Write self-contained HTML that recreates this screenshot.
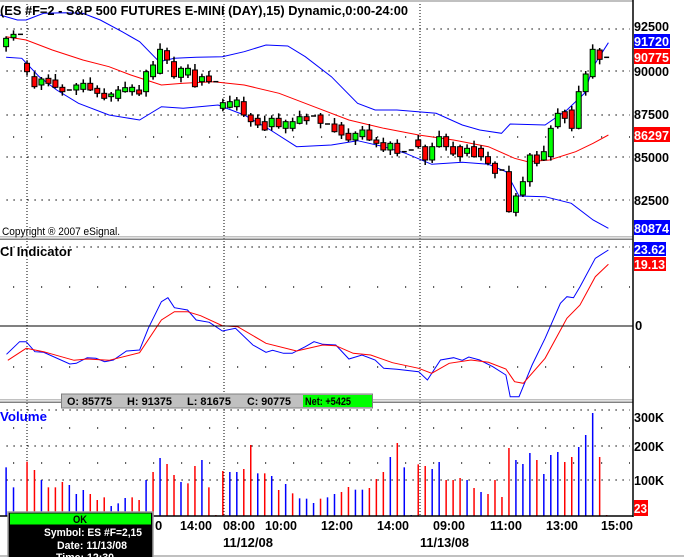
<!DOCTYPE html>
<html><head><meta charset="utf-8"><style>
html,body{margin:0;padding:0;background:#fff;width:684px;height:557px;overflow:hidden}
svg{display:block}
text{font-family:"Liberation Sans",Arial,sans-serif;font-weight:bold}
</style></head><body>
<svg id="s" width="684" height="557" xmlns="http://www.w3.org/2000/svg">
<rect x="0" y="0" width="684" height="557" fill="#fff"/>
<rect x="0" y="0" width="633" height="2" fill="#c0c0c0"/>
<g id="grid"></g>
<g id="bands"></g>
<g id="candles"></g>
<g id="ind"></g>
<g id="vol"></g>
<!-- separators -->
<rect x="0" y="236" width="633" height="1.5" fill="#c0c0c0"/>
<rect x="0" y="238.5" width="633" height="1.5" fill="#808080"/>
<rect x="0" y="399" width="633" height="1.5" fill="#c0c0c0"/>
<rect x="0" y="401.5" width="633" height="1.5" fill="#808080"/>
<line x1="633" y1="0" x2="633" y2="517" stroke="#000" stroke-width="1.5"/>
<line x1="0" y1="516" x2="633" y2="516" stroke="#000" stroke-width="1.5"/>
<line x1="0" y1="326" x2="633" y2="326" stroke="#000" stroke-width="1"/>
<rect x="0" y="555" width="684" height="2" fill="#c0c0c0"/>

<text x="0" y="15" font-size="13" textLength="408" lengthAdjust="spacingAndGlyphs">(ES #F=2 - S&amp;P 500 FUTURES E-MINI (DAY),15) Dynamic,0:00-24:00</text>
<text x="2" y="235" font-size="11" style="font-weight:normal" textLength="118" lengthAdjust="spacingAndGlyphs">Copyright ® 2007 eSignal.</text>
<text x="0" y="256" font-size="13" textLength="72" lengthAdjust="spacingAndGlyphs">CI Indicator</text>
<text x="0" y="421" font-size="13" fill="#0000ff" textLength="47" lengthAdjust="spacingAndGlyphs">Volume</text>

<!-- right axis -->
<g font-size="13">
<text x="634" y="31" textLength="35" lengthAdjust="spacingAndGlyphs">92500</text>
<rect x="634" y="34" width="36" height="14" fill="#0000ff"/>
<text x="634" y="46" fill="#fff" textLength="35" lengthAdjust="spacingAndGlyphs">91720</text>
<rect x="634" y="49" width="36" height="15" fill="#ff0000"/>
<text x="634" y="62" fill="#fff" textLength="35" lengthAdjust="spacingAndGlyphs">90775</text>
<text x="634" y="76" textLength="35" lengthAdjust="spacingAndGlyphs">90000</text>
<text x="634" y="119" textLength="35" lengthAdjust="spacingAndGlyphs">87500</text>
<rect x="634" y="127" width="36" height="15" fill="#ff0000"/>
<text x="634" y="140" fill="#fff" textLength="35" lengthAdjust="spacingAndGlyphs">86297</text>
<text x="634" y="162" textLength="35" lengthAdjust="spacingAndGlyphs">85000</text>
<text x="634" y="205" textLength="35" lengthAdjust="spacingAndGlyphs">82500</text>
<rect x="634" y="220" width="36" height="15" fill="#0000ff"/>
<text x="634" y="233" fill="#fff" textLength="35" lengthAdjust="spacingAndGlyphs">80874</text>
<rect x="634" y="242" width="32" height="14" fill="#0000ff"/>
<text x="634" y="254" fill="#fff" textLength="31" lengthAdjust="spacingAndGlyphs">23.62</text>
<rect x="634" y="257" width="32" height="14" fill="#ff0000"/>
<text x="634" y="269" fill="#fff" textLength="31" lengthAdjust="spacingAndGlyphs">19.13</text>
<text x="635" y="330">0</text>
<text x="634" y="422" textLength="30" lengthAdjust="spacingAndGlyphs">300K</text>
<text x="634" y="451" textLength="30" lengthAdjust="spacingAndGlyphs">200K</text>
<text x="634" y="485" textLength="30" lengthAdjust="spacingAndGlyphs">100K</text>
<rect x="634" y="500" width="14" height="16" fill="#ff0000"/>
<text x="634" y="513" fill="#fff" textLength="13" lengthAdjust="spacingAndGlyphs">23</text>
</g>

<!-- x axis -->
<g font-size="13">
<text x="155" y="530">0</text>
<text x="180" y="530" textLength="32" lengthAdjust="spacingAndGlyphs">14:00</text>
<text x="223" y="530" textLength="32" lengthAdjust="spacingAndGlyphs">08:00</text>
<text x="265" y="530" textLength="32" lengthAdjust="spacingAndGlyphs">10:00</text>
<text x="321" y="530" textLength="32" lengthAdjust="spacingAndGlyphs">12:00</text>
<text x="377" y="530" textLength="32" lengthAdjust="spacingAndGlyphs">14:00</text>
<text x="433" y="530" textLength="32" lengthAdjust="spacingAndGlyphs">09:00</text>
<text x="490" y="530" textLength="32" lengthAdjust="spacingAndGlyphs">11:00</text>
<text x="546" y="530" textLength="32" lengthAdjust="spacingAndGlyphs">13:00</text>
<text x="601" y="530" textLength="32" lengthAdjust="spacingAndGlyphs">15:00</text>
<text x="223" y="547" textLength="50" lengthAdjust="spacingAndGlyphs">11/12/08</text>
<text x="420" y="547" textLength="49" lengthAdjust="spacingAndGlyphs">11/13/08</text>
</g>

<!-- OHLC box -->
<rect x="61.5" y="394" width="311" height="14" fill="#c0c0c0" stroke="#808080"/>
<rect x="303" y="395" width="69" height="12" fill="#00ff00"/>
<g font-size="11">
<text x="67" y="405" textLength="45" lengthAdjust="spacingAndGlyphs">O: 85775</text>
<text x="127" y="405" textLength="45" lengthAdjust="spacingAndGlyphs">H: 91375</text>
<text x="187" y="405" textLength="44" lengthAdjust="spacingAndGlyphs">L: 81675</text>
<text x="247" y="405" textLength="44" lengthAdjust="spacingAndGlyphs">C: 90775</text>
<text x="305" y="405" textLength="46" lengthAdjust="spacingAndGlyphs">Net: +5425</text>
</g>

<!-- tooltip -->
<rect x="8" y="512" width="145" height="46" fill="#000" stroke="#a0a0a0" stroke-width="1.5"/>
<rect x="10" y="513.5" width="141" height="11" fill="#00ff00"/>
<g font-size="11">
<text x="73" y="523" textLength="14" lengthAdjust="spacingAndGlyphs">OK</text>
<text x="44" y="536" fill="#fff" textLength="98" lengthAdjust="spacingAndGlyphs">Symbol: ES #F=2,15</text>
<text x="57" y="549" fill="#fff" textLength="70" lengthAdjust="spacingAndGlyphs">Date: 11/13/08</text>
<text x="56" y="561" fill="#fff" textLength="58" lengthAdjust="spacingAndGlyphs">Time: 12:30</text>
</g>
</svg>
<script>
var NS="http://www.w3.org/2000/svg",K=2.293;
function el(p,t,a){var e=document.createElementNS(NS,t);for(var k in a)e.setAttribute(k,a[k]);document.getElementById(p).appendChild(e);return e;}
function pl(p,pts,off,col,w){var s=pts.map(function(q){return (q[0]/K).toFixed(1)+","+(q[1]/3+off).toFixed(1)}).join(" ");el(p,"polyline",{points:s,fill:"none",stroke:col,"stroke-width":w||1});}
// grid
[27,224,420].forEach(function(x){el("grid","line",{x1:x,y1:4,x2:x,y2:516,stroke:"#000","stroke-width":1,"stroke-dasharray":"1 2"});});
[29,71,115,157,200,247,410,446,480].forEach(function(y){el("grid","line",{x1:6.5,y1:y,x2:630,y2:y,stroke:"#000","stroke-width":1.2,"stroke-dasharray":"1.2 5.8"});});
[137,287,367,428,463].forEach(function(y){el("grid","line",{x1:13,y1:y,x2:630,y2:y,stroke:"#000","stroke-width":1.2,"stroke-dasharray":"1.2 26.8"});});
// bands
pl("bands",[[0,45],[40,60],[60,60],[100,40],[150,38],[190,40],[230,60],[280,95],[320,125],[365,185],[400,175],[450,172],[510,170],[560,155],[610,135],[660,138],[700,170],[760,230],[820,310],[860,330],[910,330],[1000,340],[1060,375],[1100,390],[1150,400],[1170,372],[1250,375],[1300,330],[1340,280],[1360,200],[1395,128]],0,"#0000ff");
pl("bands",[[14,110],[60,120],[120,150],[190,180],[250,200],[300,225],[370,255],[420,250],[490,245],[560,255],[640,280],[720,320],[800,360],[880,385],[960,405],[1040,420],[1120,440],[1180,475],[1210,485],[1260,480],[1320,455],[1360,430],[1395,405]],0,"#ff0000");
pl("bands",[[14,172],[50,175],[90,230],[130,270],[180,310],[250,345],[320,360],[370,320],[420,325],[500,315],[560,345],[620,390],[680,440],[760,435],[820,422],[880,440],[930,460],[990,493],[1060,487],[1120,493],[1160,515],[1190,588],[1250,590],[1310,610],[1360,660],[1395,685]],0,"#0000ff");
// candles
var C=[[14,"G",115,140],[31,"G",103,113],[47,"D",103],[62,"R",190,215],[79,"R",230,260],[95,"G",237,255],[111,"R",235,250],[127,"R",240,262],[143,"R",262,275],[159,"D",270],[175,"G",255,270],[191,"G",250,268],[207,"R",250,270],[223,"R",265,280],[239,"R",280,295],[255,"G",282,290],[271,"G",270,295],[287,"G",263,275],[303,"G",262,275],[319,"R",270,282],[335,"G",215,275],[351,"G",195,230],[367,"G",148,220],[383,"R",152,180],[399,"R",185,230],[415,"G",205,232],[431,"G",205,225],[447,"R",210,260],[463,"G",230,245],[479,"R",228,245],[495,"D",245],[511,"G",308,325],[527,"G",305,322],[543,"G",300,320],[559,"R",305,345],[575,"R",345,365],[591,"R",355,375],[607,"R",365,390],[623,"G",355,380],[639,"R",355,380],[655,"G",365,385],[671,"G",365,385],[687,"G",350,370],[703,"R",350,362],[719,"D",348],[735,"R",345,370],[751,"D",372],[767,"R",372,395],[783,"R",375,405],[799,"R",400,420],[815,"G",400,420],[831,"G",390,410],[847,"R",390,420],[863,"R",420,430],[879,"R",428,450],[895,"G",430,450],[911,"R",430,460],[927,"D",455],[943,"D",450],[959,"R",420,440],[975,"R",440,480],[991,"G",440,480],[1007,"G",410,440],[1023,"R",410,440],[1039,"R",440,462],[1055,"R",440,470],[1071,"G",445,460],[1087,"R",440,470],[1103,"R",445,470],[1119,"R",470,490],[1135,"R",490,520],[1151,"D",510],[1167,"R",515,635],[1183,"G",588,637],[1199,"G",545,585],[1215,"G",465,545],[1231,"R",465,490],[1247,"G",455,480],[1263,"G",385,470],[1279,"G",340,380],[1295,"R",335,355],[1311,"R",330,385],[1327,"G",275,385],[1343,"G",222,275],[1359,"G",148,230],[1375,"R",150,178],[1391,"D",172]];
C.forEach(function(c,i){var x=c[0]/K;
 if(c[1]=="D"){var y=c[2]/3;el("candles","line",{x1:x-2.5,y1:y,x2:x+2.5,y2:y,stroke:"#000","stroke-width":1.5});return;}
 var t=c[2]/3,b=c[3]/3,e=2+(i*7%5);
 el("candles","line",{x1:x,y1:t-e,x2:x,y2:b+(5-e)+2,stroke:"#000","stroke-width":1.5});
 el("candles","rect",{x:x-2.5,y:t,width:5,height:Math.max(b-t,1.5),fill:c[1]=="G"?"#00ff00":"#ff0000",stroke:"#000","stroke-width":1});
});
// indicator
pl("ind",[[15,358],[45,320],[60,320],[80,350],[100,352],[160,387],[175,385],[200,368],[220,370],[240,380],[260,375],[290,348],[320,345],[340,280],[370,200],[385,188],[400,218],[430,225],[450,255],[480,262],[510,288],[540,280],[580,330],[610,352],[625,346],[650,355],[670,355],[700,335],[720,320],[740,328],[770,330],[800,372],[830,360],[860,375],[880,400],[910,403],[960,410],[980,435],[1010,375],[1040,368],[1060,376],[1075,366],[1100,375],[1130,395],[1160,420],[1170,485],[1190,485],[1220,390],[1250,310],[1285,205],[1300,185],[1315,188],[1330,155],[1365,70],[1395,45]],235,"#0000ff");
pl("ind",[[18,376],[60,340],[100,350],[170,376],[200,372],[250,376],[320,353],[370,255],[400,230],[430,230],[460,242],[510,272],[545,275],[610,325],[680,348],[740,330],[770,332],[810,355],[850,360],[900,383],[960,400],[990,415],[1030,385],[1080,375],[1120,382],[1160,402],[1180,440],[1200,445],[1250,370],[1300,250],[1330,210],[1365,125],[1395,88]],235,"#ff0000");
// volume
var V=[[14,"B",262],[31,"B",322],[62,"R",245],[79,"R",270],[95,"B",300],[111,"R",322],[127,"R",322],[143,"R",306],[159,"B",315],[175,"B",342],[191,"B",330],[207,"R",342],[223,"R",360],[239,"R",352],[255,"B",378],[271,"B",370],[287,"B",354],[303,"R",352],[319,"R",360],[335,"B",300],[351,"R",276],[367,"B",234],[383,"R",252],[399,"R",285],[415,"B",306],[431,"R",310],[447,"R",258],[463,"B",240],[479,"R",322],[495,"R",405],[511,"R",273],[527,"B",276],[543,"B",276],[559,"R",267],[575,"R",195],[591,"B",280],[607,"R",280],[623,"B",288],[639,"R",330],[655,"B",312],[671,"R",340],[687,"B",355],[703,"B",356],[719,"B",369],[735,"R",356],[751,"B",352],[767,"B",342],[783,"R",336],[799,"R",321],[815,"B",329],[831,"B",329],[847,"R",324],[863,"R",297],[879,"R",276],[895,"B",231],[911,"R",189],[927,"B",262],[943,"B",405],[959,"R",253],[975,"R",258],[991,"B",267],[1007,"B",246],[1023,"R",300],[1039,"R",300],[1055,"R",294],[1071,"B",300],[1087,"R",324],[1103,"B",336],[1119,"R",342],[1135,"R",300],[1151,"R",351],[1167,"R",204],[1183,"B",240],[1199,"B",252],[1215,"B",219],[1231,"R",240],[1247,"B",282],[1263,"B",225],[1279,"B",216],[1295,"R",246],[1311,"R",231],[1327,"B",201],[1343,"B",165],[1359,"B",99],[1375,"R",231],[1391,"R",405]];
V.forEach(function(v){var x=v[0]/K;el("vol","line",{x1:x,y1:v[2]/3+380,x2:x,y2:516,stroke:v[1]=="B"?"#0000ff":"#ff0000","stroke-width":1.5});});
</script>
</body></html>
